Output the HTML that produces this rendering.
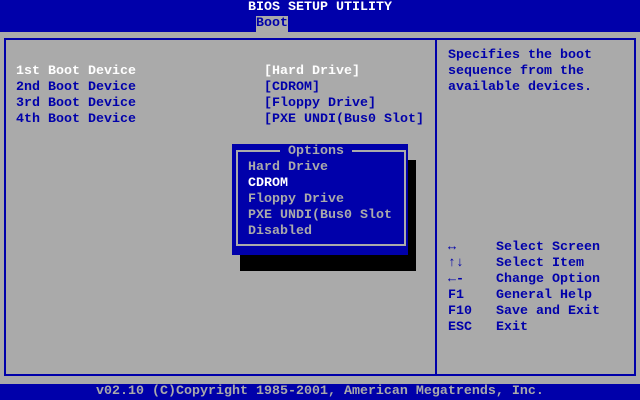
<!DOCTYPE html>
<html><head><style>
body{margin:0;width:640px;height:400px;background:#aaaaaa;position:relative;overflow:hidden;font-family:"Liberation Mono",monospace;font-size:13.33px;font-weight:bold;}
.t{position:absolute;white-space:pre;line-height:16px;height:16px;}
.b{color:#0000aa}.w{color:#fff}.g{color:#aaaaaa}
.box{position:absolute}
</style></head><body>
<div class="box" style="left:0;top:0;width:640px;height:32px;background:#0000aa"></div>
<div class="t w" style="left:248px;top:0">BIOS SETUP UTILITY</div>
<div class="box" style="left:256px;top:16px;width:32px;height:16px;background:#aaaaaa"></div>
<div class="t b" style="left:256px;top:16px">Boot</div>
<div class="box" style="left:4px;top:38px;width:628px;height:334px;border:2px solid #0000aa"></div>
<div class="box" style="left:435px;top:38px;width:2px;height:338px;background:#0000aa"></div>
<div class="t w" style="left:16px;top:64px">1st Boot Device</div>
<div class="t b" style="left:16px;top:80px">2nd Boot Device</div>
<div class="t b" style="left:16px;top:96px">3rd Boot Device</div>
<div class="t b" style="left:16px;top:112px">4th Boot Device</div>
<div class="t w" style="left:264px;top:64px">[Hard Drive]</div>
<div class="t b" style="left:264px;top:80px">[CDROM]</div>
<div class="t b" style="left:264px;top:96px">[Floppy Drive]</div>
<div class="t b" style="left:264px;top:112px">[PXE UNDI(Bus0 Slot]</div>
<div class="t b" style="left:448px;top:48px">Specifies the boot
sequence from the
available devices.</div>
<div class="t b" style="left:448px;top:240px;height:auto">↔
↑↓
←-
F1
F10
ESC</div>
<div class="t b" style="left:496px;top:240px;height:auto">Select Screen
Select Item
Change Option
General Help
Save and Exit
Exit</div>
<div class="box" style="left:240px;top:160px;width:176px;height:111px;background:#000"></div>
<div class="box" style="left:232px;top:144px;width:176px;height:111px;background:#0000aa"></div>
<div class="box" style="left:236px;top:150px;width:166px;height:94px;border:2px solid #aaaaaa;border-top:none"></div>
<div class="box" style="left:236px;top:150px;width:44px;height:2px;background:#aaaaaa"></div>
<div class="box" style="left:352px;top:150px;width:52px;height:2px;background:#aaaaaa"></div>
<div class="t g" style="left:288px;top:144px">Options</div>
<div class="t g" style="left:248px;top:160px">Hard Drive</div>
<div class="t w" style="left:248px;top:176px">CDROM</div>
<div class="t g" style="left:248px;top:192px">Floppy Drive</div>
<div class="t g" style="left:248px;top:208px">PXE UNDI(Bus0 Slot</div>
<div class="t g" style="left:248px;top:224px">Disabled</div>
<div class="box" style="left:0;top:384px;width:640px;height:16px;background:#0000aa"></div>
<div class="t g" style="left:96px;top:384px">v02.10 (C)Copyright 1985-2001, American Megatrends, Inc.</div>
</body></html>
